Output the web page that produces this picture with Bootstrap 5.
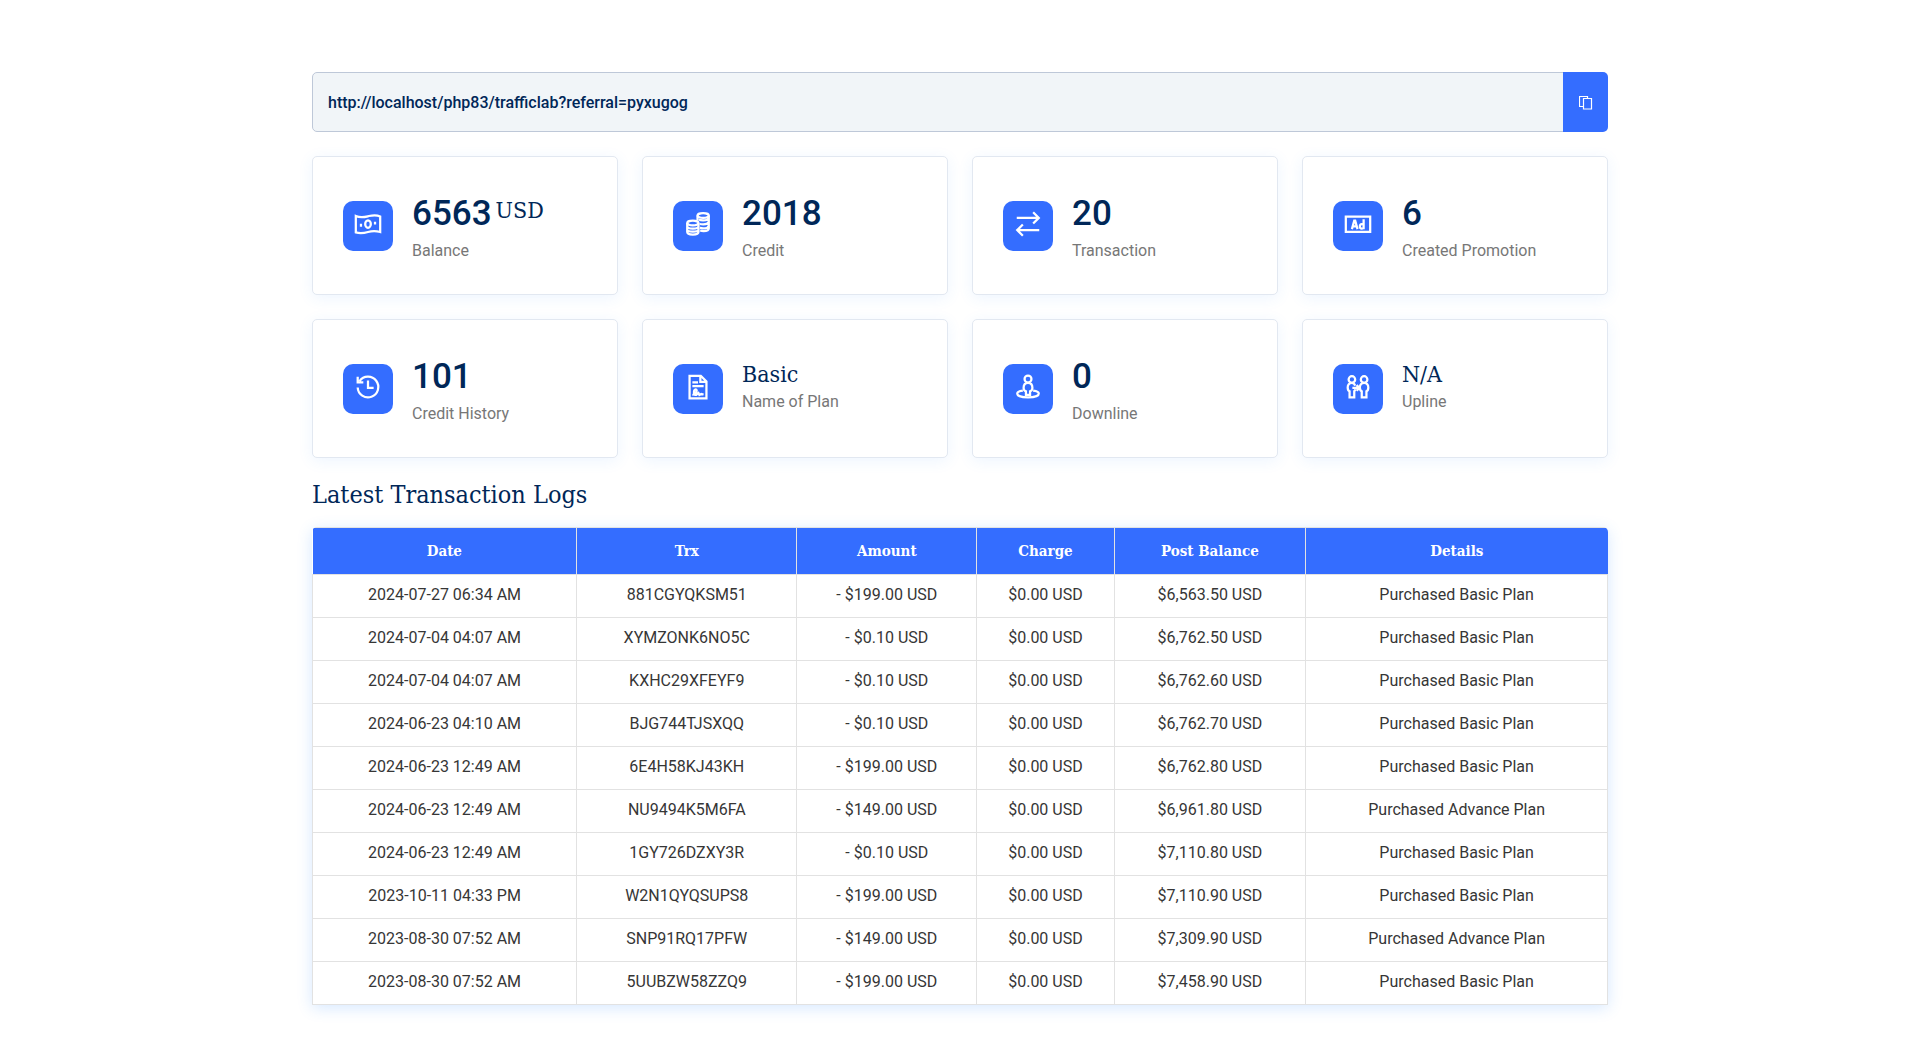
<!DOCTYPE html>
<html lang="en">
<head>
<meta charset="utf-8">
<meta name="viewport" content="width=device-width, initial-scale=1">
<title>Dashboard</title>
<link href="https://cdn.jsdelivr.net/npm/bootstrap@5.3.0/dist/css/bootstrap.min.css" rel="stylesheet">
<style>
:root { --brand: #346dff; --navy: #002758; --slab: "Roboto Slab", "DejaVu Serif Condensed", "DejaVu Serif", serif; }
body { font-family: Roboto, sans-serif; font-size: 16px; line-height: 27px; color: #363636; }
.dash { padding-top: 72px; padding-bottom: 48px; }
.ref-box .form-control { height: 60px; padding: 0 15px; background: #f1f5f8; border-color: #bec8d8; border-radius: 5px; color: var(--navy); font-weight: 500; }
.ref-box .btn { width: 45px; padding: 0; background: var(--brand); border: 0; border-radius: 5px; }
.stat { border: 1px solid #e2e8f1; border-radius: 5px; padding: 30px; box-shadow: 0 3px 15px rgba(51, 140, 255, .09); background: #fff; min-height: 139px; }
.stat-icon { width: 50px; height: 50px; margin-right: 19px; padding-bottom: 3px; border-radius: 10px; background: var(--brand); }
.stat-icon svg { width: 30px; height: 30px; }
.line-art { fill: none; stroke: #fff; stroke-width: 2.4; }
.stat-num { padding-top: 3px; font-size: 35px; line-height: 47px; font-weight: 500; color: var(--navy); }
.stat-word { font-family: var(--slab); font-size: 23px; line-height: 27px; font-weight: 400; color: var(--navy); }
.stat-unit { line-height: 46px; }
.stat-label { color: #777; }
.stat-word + .stat-label { padding-bottom: 2px; }
.sec-title { margin: 21px 0 16px; font-family: var(--slab); font-size: 25px; line-height: 32px; font-weight: 500; color: var(--navy); }
.log-wrap { border-radius: 5px 5px 0 0; box-shadow: 0 3px 15px rgba(51, 140, 255, .2); overflow: hidden; }
.log { --bs-table-color: #363636; table-layout: fixed; min-width: 900px; text-align: center; border-color: #e2e2e2; }
.log th { font-family: var(--slab); font-size: 15px; line-height: 26px; font-weight: 700; color: #fff; background: var(--brand); padding: 10px 8px; border-width: 0 1px 0 0; }
.log th:last-child { border-right-width: 0; }
.log td { line-height: 26px; padding: 7px 8px 9px; }
.c-date { width: 20.4%; } .c-trx { width: 17%; } .c-amt { width: 13.9%; } .c-chg { width: 10.6%; } .c-bal { width: 14.8%; }
</style>
</head>
<body>
<main class="container-xxl dash">
  <div class="input-group ref-box mb-4">
    <input type="text" class="form-control" aria-label="Referral link" value="http://localhost/php83/trafficlab?referral=pyxugog" readonly>
    <button class="btn" type="button" aria-label="Copy link">
      <svg width="14" height="14" viewBox="0 0 14 14" fill="none" stroke="#fff" stroke-width="1.2"><path d="M4.500 10.500h-4v-10h8v2M4.500 2.500h8v10.500h-8z"/></svg>
    </button>
  </div>

  <div class="row row-cols-1 row-cols-sm-2 row-cols-xl-4 g-4">
    <div class="col"><div class="stat d-flex align-items-center">
      <span class="stat-icon d-flex align-items-center justify-content-center flex-shrink-0"><svg class="line-art" viewBox="0 0 32 32"><path d="M3 7.500C9 10 13 8.500 17 7.500S25 6 29 8v16.500C24 23 20 23.300 16 24.500S8 26.500 3 25z"/><ellipse cx="16" cy="16" rx="3" ry="4"/><path d="M8.500 15.800v3M23.500 13.500v3"/></svg></span>
      <div><div class="d-flex"><span class="stat-num">6563</span><span class="stat-word stat-unit ms-1">USD</span></div><div class="stat-label">Balance</div></div>
    </div></div>
    <div class="col"><div class="stat d-flex align-items-center">
      <span class="stat-icon d-flex align-items-center justify-content-center flex-shrink-0"><svg class="line-art" viewBox="0 0 32 32"><ellipse cx="21.500" cy="7" rx="6" ry="2.500"/><path d="M15.500 7v5M27.500 7v13.500c0 2-2.500 3-5.500 3-1.500 0-2.700-.2-3.700-.6M17 11.200c1.200.6 2.700.8 4.500.8 3 0 5.500-1 5.500-2.500M18 16c1 .3 2.200.4 3.500.4 3 0 5.500-1 5.500-2.700M18 20.200c1 .2 2.200.4 3.500.4 3 0 5.500-1 5.500-2.800"/><ellipse cx="10.500" cy="15" rx="6" ry="2.500"/><path d="M4.500 15v9.500C4.500 26 7 27.200 10.500 27.200s6-1.200 6-2.700V15M4.500 18.500c0 1.500 2.500 2.500 6 2.500s6-1 6-2.500M4.500 21.800c0 1.500 2.500 2.300 6 2.300s6-.8 6-2.300"/></svg></span>
      <div><div class="stat-num">2018</div><div class="stat-label">Credit</div></div>
    </div></div>
    <div class="col"><div class="stat d-flex align-items-center">
      <span class="stat-icon d-flex align-items-center justify-content-center flex-shrink-0"><svg class="line-art" viewBox="0 0 32 32"><path d="M4 9.500h23M21.500 3.500l6 6-6 6M28 22.500H5M10.500 16.500l-6 6 6 6"/></svg></span>
      <div><div class="stat-num">20</div><div class="stat-label">Transaction</div></div>
    </div></div>
    <div class="col"><div class="stat d-flex align-items-center">
      <span class="stat-icon d-flex align-items-center justify-content-center flex-shrink-0"><svg class="line-art" viewBox="0 0 32 32"><path d="M3 8h26v16.500H3z"/><path d="M9.500 21.500l2.500-9h1l2.500 9M10.500 18.500h4M22 11v10.500M22 17.500c0-2-4-2-4 .8v.7c0 2.500 4 2.500 4 .5"/></svg></span>
      <div><div class="stat-num">6</div><div class="stat-label">Created Promotion</div></div>
    </div></div>
    <div class="col"><div class="stat d-flex align-items-center">
      <span class="stat-icon d-flex align-items-center justify-content-center flex-shrink-0"><svg class="line-art" viewBox="0 0 32 32"><path d="M5 16.500a11 11 0 1 0 2-6.800M5 5v6h6M16 9v8h6"/></svg></span>
      <div><div class="stat-num">101</div><div class="stat-label">Credit History</div></div>
    </div></div>
    <div class="col"><div class="stat d-flex align-items-center">
      <span class="stat-icon d-flex align-items-center justify-content-center flex-shrink-0"><svg class="line-art" viewBox="0 0 32 32"><path d="M7 4h12l6 6v18H7zM18.500 4v6.500H25M10 11h6M10 15h12"/><path d="M10 24.500c4-.5 6-6 3.500-6S11 25 14 24.500l2.500-2 1 2 2-1 2.500.5"/></svg></span>
      <div><div class="stat-word">Basic</div><div class="stat-label">Name of Plan</div></div>
    </div></div>
    <div class="col"><div class="stat d-flex align-items-center">
      <span class="stat-icon d-flex align-items-center justify-content-center flex-shrink-0"><svg class="line-art" viewBox="0 0 32 32"><circle cx="16" cy="7.500" r="3.700"/><path d="M13.800 24.500v-4c-1.500-.5-2.500-1.500-2.500-3.500 0-3 1.500-5.500 4.700-5.500s4.700 2.500 4.700 5.500c0 2-1 3-2.500 3.500v4z"/><path d="M10.500 19.800c-4 .6-6 1.600-6 3 0 2.500 5 4.200 11.500 4.200s11.500-1.700 11.500-4.200c0-1.400-2-2.400-6-3"/></svg></span>
      <div><div class="stat-num">0</div><div class="stat-label">Downline</div></div>
    </div></div>
    <div class="col"><div class="stat d-flex align-items-center">
      <span class="stat-icon d-flex align-items-center justify-content-center flex-shrink-0"><svg class="line-art" viewBox="0 0 32 32"><circle cx="9.500" cy="8" r="3.500"/><circle cx="22.500" cy="8" r="3.500"/><path d="M13 14.500c-.8-2-2-3-3.500-3-3 0-4.500 2.500-4.500 5 0 2 .6 3.500 2 4V27h5v-6.500l1.500-2M22.500 11.500c-3 0-4.500 2.500-4.500 5 0 2 .6 3.500 2 4V27h5v-6.500c1.400-.5 2-2 2-4 0-2.500-1.500-5-4.500-5zM10 17h7.500M14.500 14l3 3-3 3"/></svg></span>
      <div><div class="stat-word">N/A</div><div class="stat-label">Upline</div></div>
    </div></div>
  </div>

  <h2 class="sec-title">Latest Transaction Logs</h2>
  <div class="log-wrap table-responsive">
    <table class="table table-bordered log mb-0">
      <colgroup><col class="c-date"><col class="c-trx"><col class="c-amt"><col class="c-chg"><col class="c-bal"><col></colgroup>
      <thead><tr><th scope="col">Date</th><th scope="col">Trx</th><th scope="col">Amount</th><th scope="col">Charge</th><th scope="col">Post Balance</th><th scope="col">Details</th></tr></thead>
      <tbody>
        <tr><td>2024-07-27 06:34 AM</td><td>881CGYQKSM51</td><td>- $199.00 USD</td><td>$0.00 USD</td><td>$6,563.50 USD</td><td>Purchased Basic Plan</td></tr>
        <tr><td>2024-07-04 04:07 AM</td><td>XYMZONK6NO5C</td><td>- $0.10 USD</td><td>$0.00 USD</td><td>$6,762.50 USD</td><td>Purchased Basic Plan</td></tr>
        <tr><td>2024-07-04 04:07 AM</td><td>KXHC29XFEYF9</td><td>- $0.10 USD</td><td>$0.00 USD</td><td>$6,762.60 USD</td><td>Purchased Basic Plan</td></tr>
        <tr><td>2024-06-23 04:10 AM</td><td>BJG744TJSXQQ</td><td>- $0.10 USD</td><td>$0.00 USD</td><td>$6,762.70 USD</td><td>Purchased Basic Plan</td></tr>
        <tr><td>2024-06-23 12:49 AM</td><td>6E4H58KJ43KH</td><td>- $199.00 USD</td><td>$0.00 USD</td><td>$6,762.80 USD</td><td>Purchased Basic Plan</td></tr>
        <tr><td>2024-06-23 12:49 AM</td><td>NU9494K5M6FA</td><td>- $149.00 USD</td><td>$0.00 USD</td><td>$6,961.80 USD</td><td>Purchased Advance Plan</td></tr>
        <tr><td>2024-06-23 12:49 AM</td><td>1GY726DZXY3R</td><td>- $0.10 USD</td><td>$0.00 USD</td><td>$7,110.80 USD</td><td>Purchased Basic Plan</td></tr>
        <tr><td>2023-10-11 04:33 PM</td><td>W2N1QYQSUPS8</td><td>- $199.00 USD</td><td>$0.00 USD</td><td>$7,110.90 USD</td><td>Purchased Basic Plan</td></tr>
        <tr><td>2023-08-30 07:52 AM</td><td>SNP91RQ17PFW</td><td>- $149.00 USD</td><td>$0.00 USD</td><td>$7,309.90 USD</td><td>Purchased Advance Plan</td></tr>
        <tr><td>2023-08-30 07:52 AM</td><td>5UUBZW58ZZQ9</td><td>- $199.00 USD</td><td>$0.00 USD</td><td>$7,458.90 USD</td><td>Purchased Basic Plan</td></tr>
      </tbody>
    </table>
  </div>
</main>
<script src="https://cdn.jsdelivr.net/npm/bootstrap@5.3.0/dist/js/bootstrap.bundle.min.js"></script>
</body>
</html>
